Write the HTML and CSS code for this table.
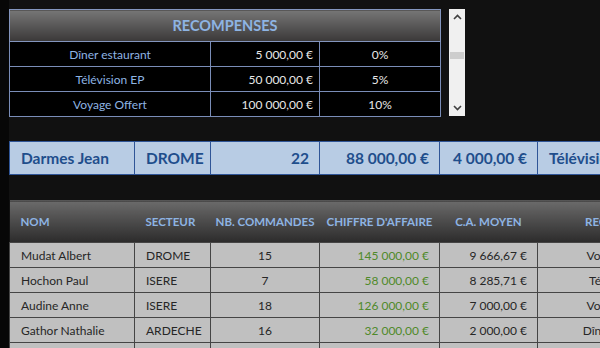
FILE: index.html
```html
<!DOCTYPE html>
<html lang="fr">
<head>
<meta charset="utf-8">
<title>Récompenses</title>
<link rel="stylesheet" href="styles.css">
</head>
<body>
<div class="sheet">
  <div class="gutter"></div>
  <div class="content">
    <div class="top">
      <table class="rewards">
        <colgroup><col class="c-a"><col class="c-b"><col class="c-c"></colgroup>
        <thead>
          <tr><th colspan="3">RECOMPENSES</th></tr>
        </thead>
        <tbody>
          <tr><td class="lbl">Dîner estaurant</td><td class="num">5 000,00 €</td><td class="pct">0%</td></tr>
          <tr><td class="lbl">Télévision EP</td><td class="num">50 000,00 €</td><td class="pct">5%</td></tr>
          <tr><td class="lbl">Voyage Offert</td><td class="num">100 000,00 €</td><td class="pct">10%</td></tr>
        </tbody>
      </table>
      <div class="scrollbar">
        <div class="sb-btn">
          <svg width="9" height="6" viewBox="0 0 9 6"><polyline points="1,5 4.5,1.5 8,5" fill="none" stroke="#404040" stroke-width="1.6"/></svg>
        </div>
        <div class="sb-thumb"></div>
        <div class="sb-space"></div>
        <div class="sb-btn">
          <svg width="9" height="6" viewBox="0 0 9 6"><polyline points="1,1 4.5,4.5 8,1" fill="none" stroke="#404040" stroke-width="1.6"/></svg>
        </div>
      </div>
    </div>

    <table class="current">
      <colgroup><col class="k1"><col class="k2"><col class="k3"><col class="k4"><col class="k5"><col class="k6"></colgroup>
      <tbody>
        <tr>
          <td>Darmes Jean</td>
          <td>DROME</td>
          <td class="r">22</td>
          <td class="r">88 000,00 €</td>
          <td class="r">4 000,00 €</td>
          <td>Télévision EP</td>
        </tr>
      </tbody>
    </table>

    <table class="sales">
      <colgroup><col class="k1"><col class="k2"><col class="k3"><col class="k4"><col class="k5"><col class="k6"></colgroup>
      <thead>
        <tr>
          <th class="l">NOM</th>
          <th class="l">SECTEUR</th>
          <th>NB. COMMANDES</th>
          <th>CHIFFRE D'AFFAIRE</th>
          <th>C.A. MOYEN</th>
          <th>RECOMPENSE</th>
        </tr>
      </thead>
      <tbody>
        <tr><td>Mudat Albert</td><td>DROME</td><td class="c">15</td><td class="r ca">145 000,00 €</td><td class="r">9 666,67 €</td><td class="c">Voyage Offert</td></tr>
        <tr><td>Hochon Paul</td><td>ISERE</td><td class="c">7</td><td class="r ca">58 000,00 €</td><td class="r">8 285,71 €</td><td class="c">Télévision EP</td></tr>
        <tr><td>Audine Anne</td><td>ISERE</td><td class="c">18</td><td class="r ca">126 000,00 €</td><td class="r">7 000,00 €</td><td class="c">Voyage Offert</td></tr>
        <tr><td>Gathor Nathalie</td><td>ARDECHE</td><td class="c">16</td><td class="r ca">32 000,00 €</td><td class="r">2 000,00 €</td><td class="c">Dîner estaurant</td></tr>
        <tr><td>Lemaire Paul</td><td>SAVOIE</td><td class="c">9</td><td class="r ca">75 000,00 €</td><td class="r">8 333,33 €</td><td class="c">Télévision EP</td></tr>
      </tbody>
    </table>
  </div>
</div>
</body>
</html>
```

FILE: styles.css
```css
html, body {
  margin: 0;
  padding: 0;
}
body {
  width: 600px;
  height: 348px;
  overflow: hidden;
  background: #111111;
  font-family: Lato, "Open Sans", "Liberation Sans", sans-serif;
}
.sheet {
  display: flex;
  height: 348px;
}
.gutter {
  width: 9px;
  flex: none;
  background: #070707;
}
.content {
  flex: 1;
  padding-top: 9px;
  overflow: hidden;
}
table {
  border-collapse: collapse;
  table-layout: fixed;
}
.top {
  display: flex;
  align-items: flex-start;
  gap: 8px;
}

/* rewards table */
.rewards {
  width: 431px;
  border: 1px solid #8395be;
}
.rewards .c-a { width: 201px; }
.rewards .c-b { width: 109px; }
.rewards .c-c { width: 121px; }
.rewards th {
  height: 31px;
  padding: 0;
  background: linear-gradient(#767676, #3a3838);
  color: #8eb4e3;
  font-size: 14.5px;
  font-weight: 700;
  text-align: center;
  border-bottom: 1px solid #8395be;
}
.rewards td {
  height: 24px;
  padding: 0 6px;
  background: #000;
  border: 1px solid #7a8db8;
  font-size: 12px;
  white-space: nowrap;
}
.rewards .lbl { color: #8eb4e3; text-align: center; }
.rewards .num { color: #e8e8e8; text-align: right; }
.rewards .pct { color: #e8e8e8; text-align: center; }

.scrollbar {
  width: 16px;
  height: 107px;
  background: #f0f0f0;
  display: flex;
  flex-direction: column;
  align-items: center;
}
.sb-btn {
  height: 16px;
  width: 16px;
  display: flex;
  align-items: center;
  justify-content: center;
}
.sb-thumb {
  margin-top: 27px;
  width: 14px;
  height: 7px;
  background: #cdcdcd;
}
.sb-space { flex: 1; }

/* current seller row */
.current {
  margin-top: 24px;
  width: 700px;
  border-top: 1px solid #2f5597;
  border-bottom: 1px solid #2f5597;
}
.k1 { width: 125px; }
.k2 { width: 76px; }
.k3 { width: 109px; }
.k4 { width: 120px; }
.k5 { width: 98px; }
.k6 { width: 172px; }
.current td {
  height: 32px;
  padding: 0 10px 0 11px;
  background: #b8cce4;
  border-left: 1px solid #2f5597;
  color: #1f4e8c;
  font-size: 15.5px;
  font-weight: 700;
  white-space: nowrap;
  overflow: hidden;
}
.current .r { text-align: right; }

/* sales table */
.sales {
  margin-top: 25px;
  width: 700px;
}
.sales th {
  height: 41px;
  padding: 0 3px;
  background: linear-gradient(#6a6a6a, #2c2b2b);
  color: #8eb4e3;
  font-size: 11.5px;
  font-weight: 700;
  text-align: center;
  white-space: nowrap;
  overflow: hidden;
  border-top: 1px solid #555;
}
.sales th.l { text-align: left; padding-left: 11px; }
.sales td {
  height: 24px;
  padding: 0 10px 0 11px;
  background: #c0c0c0;
  border: 1px solid #454545;
  color: #262626;
  font-size: 12px;
  white-space: nowrap;
  overflow: hidden;
}
.sales .c { text-align: center; padding: 0 4px; }
.sales .r { text-align: right; }
.sales .ca { color: #4f8a2a; }
```
